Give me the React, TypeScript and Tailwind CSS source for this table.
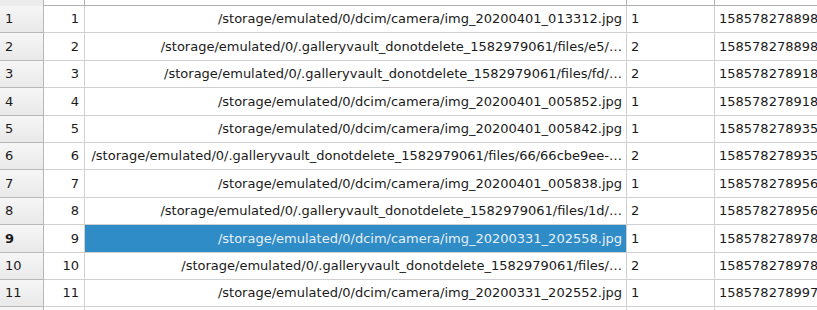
import React from "react";

const rows: [string, string, string][] = [
  ["/storage/emulated/0/dcim/camera/img_20200401_013312.jpg", "1", "158578278898"],
  ["/storage/emulated/0/.galleryvault_donotdelete_1582979061/files/e5/…", "2", "158578278898"],
  ["/storage/emulated/0/.galleryvault_donotdelete_1582979061/files/fd/…", "2", "158578278918"],
  ["/storage/emulated/0/dcim/camera/img_20200401_005852.jpg", "1", "158578278918"],
  ["/storage/emulated/0/dcim/camera/img_20200401_005842.jpg", "1", "158578278935"],
  ["/storage/emulated/0/.galleryvault_donotdelete_1582979061/files/66/66cbe9ee-…", "2", "158578278935"],
  ["/storage/emulated/0/dcim/camera/img_20200401_005838.jpg", "1", "158578278956"],
  ["/storage/emulated/0/.galleryvault_donotdelete_1582979061/files/1d/…", "2", "158578278956"],
  ["/storage/emulated/0/dcim/camera/img_20200331_202558.jpg", "1", "158578278978"],
  ["/storage/emulated/0/.galleryvault_donotdelete_1582979061/files/…", "2", "158578278978"],
  ["/storage/emulated/0/dcim/camera/img_20200331_202552.jpg", "1", "158578278997"],
  ["", "", ""],
];

export default function App() {
  return (
    <div
      className="w-[817px] h-[310px] overflow-hidden bg-white text-[13px] text-[#1a1a1a]"
      style={{ fontFamily: '"DejaVu Sans", sans-serif' }}
    >
      {/* header strip */}
      <div className="flex h-[6px]">
        <div className="w-[44px] shrink-0 bg-[#ececec] border-r border-[#b5b5b5]" />
        <div className="w-[41px] shrink-0 border-b border-r border-[#b0b0b0]" />
        <div className="w-[542px] shrink-0 border-b border-r border-[#b0b0b0]" />
        <div className="w-[88px] shrink-0 border-b border-r border-[#b0b0b0]" />
        <div className="flex-1 border-b border-[#b0b0b0]" />
      </div>
      {rows.map((r, i) => {
        const sel = i === 8;
        const last = i === rows.length - 1;
        return (
          <div key={i} className="flex h-[27.4px]">
            <div
              className={`w-[44px] shrink-0 flex items-center pl-[5px] bg-gradient-to-b from-[#f6f6f6] to-[#e9e9e9] border-r border-b border-[#b8b8b8] ${
                sel ? "font-bold" : ""
              }`}
            >
              {last ? "" : i + 1}
            </div>
            <div className="w-[41px] shrink-0 flex items-center justify-end pr-[5px] border-r border-b border-[#d0d0d0]">
              {last ? "" : i + 1}
            </div>
            <div
              className={`w-[542px] shrink-0 flex items-center justify-end pr-[4px] border-r border-b whitespace-nowrap overflow-hidden ${
                sel ? "bg-[#308cc6] text-[#e6f0f8] border-[#d0d0d0]" : "border-[#d0d0d0]"
              }`}
            >
              {r[0]}
            </div>
            <div className="w-[88px] shrink-0 flex items-center pl-[4px] border-r border-b border-[#d0d0d0]">
              {r[1]}
            </div>
            <div className="flex-1 flex items-center pl-[4px] border-b border-[#d0d0d0] whitespace-nowrap overflow-hidden">
              {r[2]}
            </div>
          </div>
        );
      })}
    </div>
  );
}
